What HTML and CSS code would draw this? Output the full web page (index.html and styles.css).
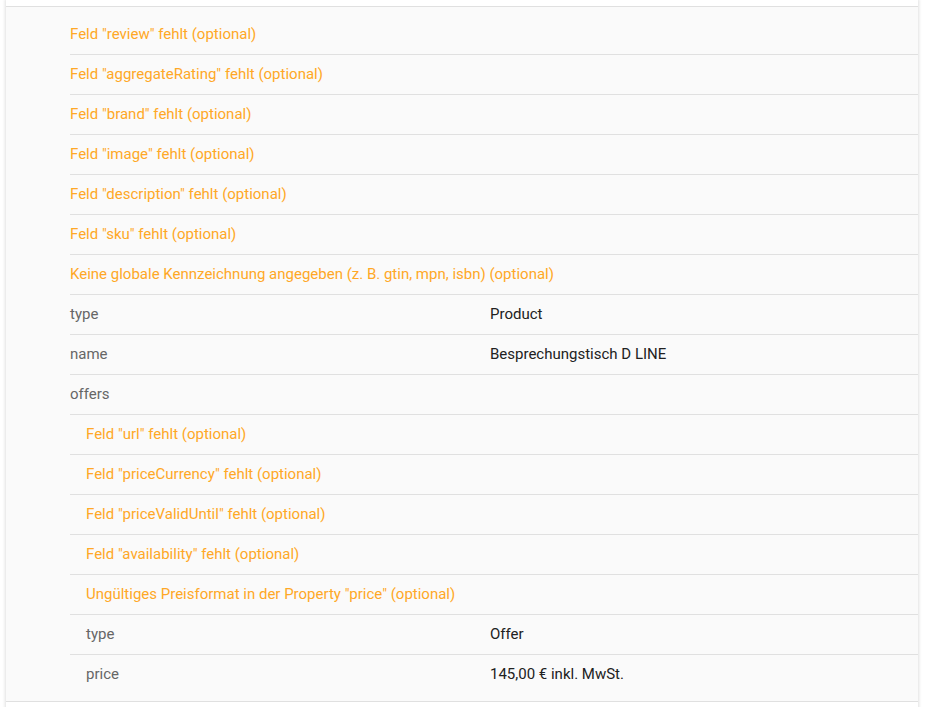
FILE: index.html
```html
<!DOCTYPE html>
<html lang="de">
<head>
<meta charset="utf-8">
<title>Strukturierte Daten</title>
<link rel="stylesheet" href="styles.css">
</head>
<body>
<div class="panel">
  <div class="panel-top"></div>
  <div class="details">
    <div class="row warn"><span class="key">Feld "review" fehlt (optional)</span></div>
    <div class="row warn"><span class="key">Feld "aggregateRating" fehlt (optional)</span></div>
    <div class="row warn"><span class="key">Feld "brand" fehlt (optional)</span></div>
    <div class="row warn"><span class="key">Feld "image" fehlt (optional)</span></div>
    <div class="row warn"><span class="key">Feld "description" fehlt (optional)</span></div>
    <div class="row warn"><span class="key">Feld "sku" fehlt (optional)</span></div>
    <div class="row warn"><span class="key">Keine globale Kennzeichnung angegeben (z. B. gtin, mpn, isbn) (optional)</span></div>
    <div class="row"><span class="key">type</span><span class="val">Product</span></div>
    <div class="row"><span class="key">name</span><span class="val">Besprechungstisch D LINE</span></div>
    <div class="row"><span class="key">offers</span><span class="val"></span></div>
    <div class="row warn nested"><span class="key">Feld "url" fehlt (optional)</span></div>
    <div class="row warn nested"><span class="key">Feld "priceCurrency" fehlt (optional)</span></div>
    <div class="row warn nested"><span class="key">Feld "priceValidUntil" fehlt (optional)</span></div>
    <div class="row warn nested"><span class="key">Feld "availability" fehlt (optional)</span></div>
    <div class="row warn nested"><span class="key">Ungültiges Preisformat in der Property "price" (optional)</span></div>
    <div class="row nested"><span class="key">type</span><span class="val">Offer</span></div>
    <div class="row nested"><span class="key">price</span><span class="val">145,00 € inkl. MwSt.</span></div>
  </div>
  <div class="panel-bottom"></div>
</div>
</body>
</html>
```
FILE: styles.css
```css
html, body {
  margin: 0;
  padding: 0;
  background: #ffffff;
  font-family: Roboto, "Liberation Sans", Arial, sans-serif;
  font-size: 15px;
}

.panel {
  margin-left: 6px;
  width: 912px;
  background: #ffffff;
  box-shadow: 0 0 3px 1px rgba(0, 0, 0, 0.12);
  min-height: 720px;
}

.panel-top {
  height: 6px;
  border-bottom: 1px solid #e0e0e0;
}

.details {
  background: #fafafa;
  padding: 8px 0 6px 64px;
  border-bottom: 1px solid #e0e0e0;
}

.row {
  box-sizing: border-box;
  display: grid;
  grid-template-columns: 420px 1fr;
  height: 40px;
  padding-bottom: 2px;
  align-items: center;
  border-bottom: 1px solid #e0e0e0;
}

.row:last-child {
  border-bottom: none;
}

.key {
  color: #666666;
  white-space: nowrap;
}

.val {
  color: #212121;
}

.warn .key {
  color: #ffa826;
  grid-column: 1 / span 2;
}

.nested .key {
  padding-left: 16px;
}
```
